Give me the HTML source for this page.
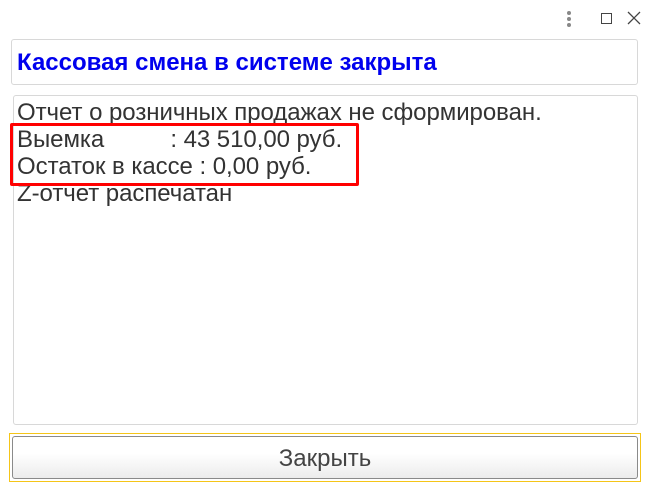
<!DOCTYPE html>
<html><head><meta charset="utf-8"><style>
body{margin:0;width:660px;height:495px;background:#fff;position:relative;overflow:hidden;font-family:"Liberation Sans",sans-serif}
.abs{position:absolute}
.title{left:11px;top:39px;width:625px;height:44px;border:1px solid #d8d8d8;border-radius:3px}
.title span{position:absolute;left:5px;top:9px;font-size:24px;font-weight:bold;color:#0000ee;letter-spacing:0}
.box{left:13px;top:95px;width:623px;height:328px;border:1px solid #d8d8d8;border-radius:3px}
.txt{left:17px;top:99px;font-size:24px;line-height:27px;color:#333;white-space:pre;letter-spacing:-0.05px}
.red{left:10px;top:123px;width:343px;height:57px;border:3px solid #f00;border-radius:2px}
.yel{left:9px;top:433px;width:630px;height:47px;border:1px solid #f5c518}
.btn{left:12px;top:436px;width:624px;height:41px;border:1px solid #8a8a8a;border-radius:3px;background:linear-gradient(#fff,#fff 40%,#ececec);text-align:center;line-height:44px;font-size:24px;color:#444}
</style></head><body>
<div class="abs" style="left:567px;top:11px">
<div style="width:4px;height:4px;background:#888;border-radius:2px;margin-bottom:2px"></div>
<div style="width:4px;height:4px;background:#888;border-radius:2px;margin-bottom:2px"></div>
<div style="width:4px;height:4px;background:#888;border-radius:2px"></div></div>
<div class="abs" style="left:601px;top:13px;width:9px;height:9px;border:1px solid #444"></div>
<svg class="abs" style="left:627px;top:11px" width="14" height="14"><path d="M1 1L13 13M13 1L1 13" stroke="#444" stroke-width="1.3"/></svg>
<div class="abs title"><span>Кассовая смена в системе закрыта</span></div>
<div class="abs box"></div>
<div class="abs txt">Отчет о розничных продажах не сформирован.
Выемка          : 43 510,00 руб.
Остаток в кассе : 0,00 руб.
Z-отчет распечатан</div>
<div class="abs red"></div>
<div class="abs yel"></div>
<div class="abs btn">Закрыть</div>
</body></html>
